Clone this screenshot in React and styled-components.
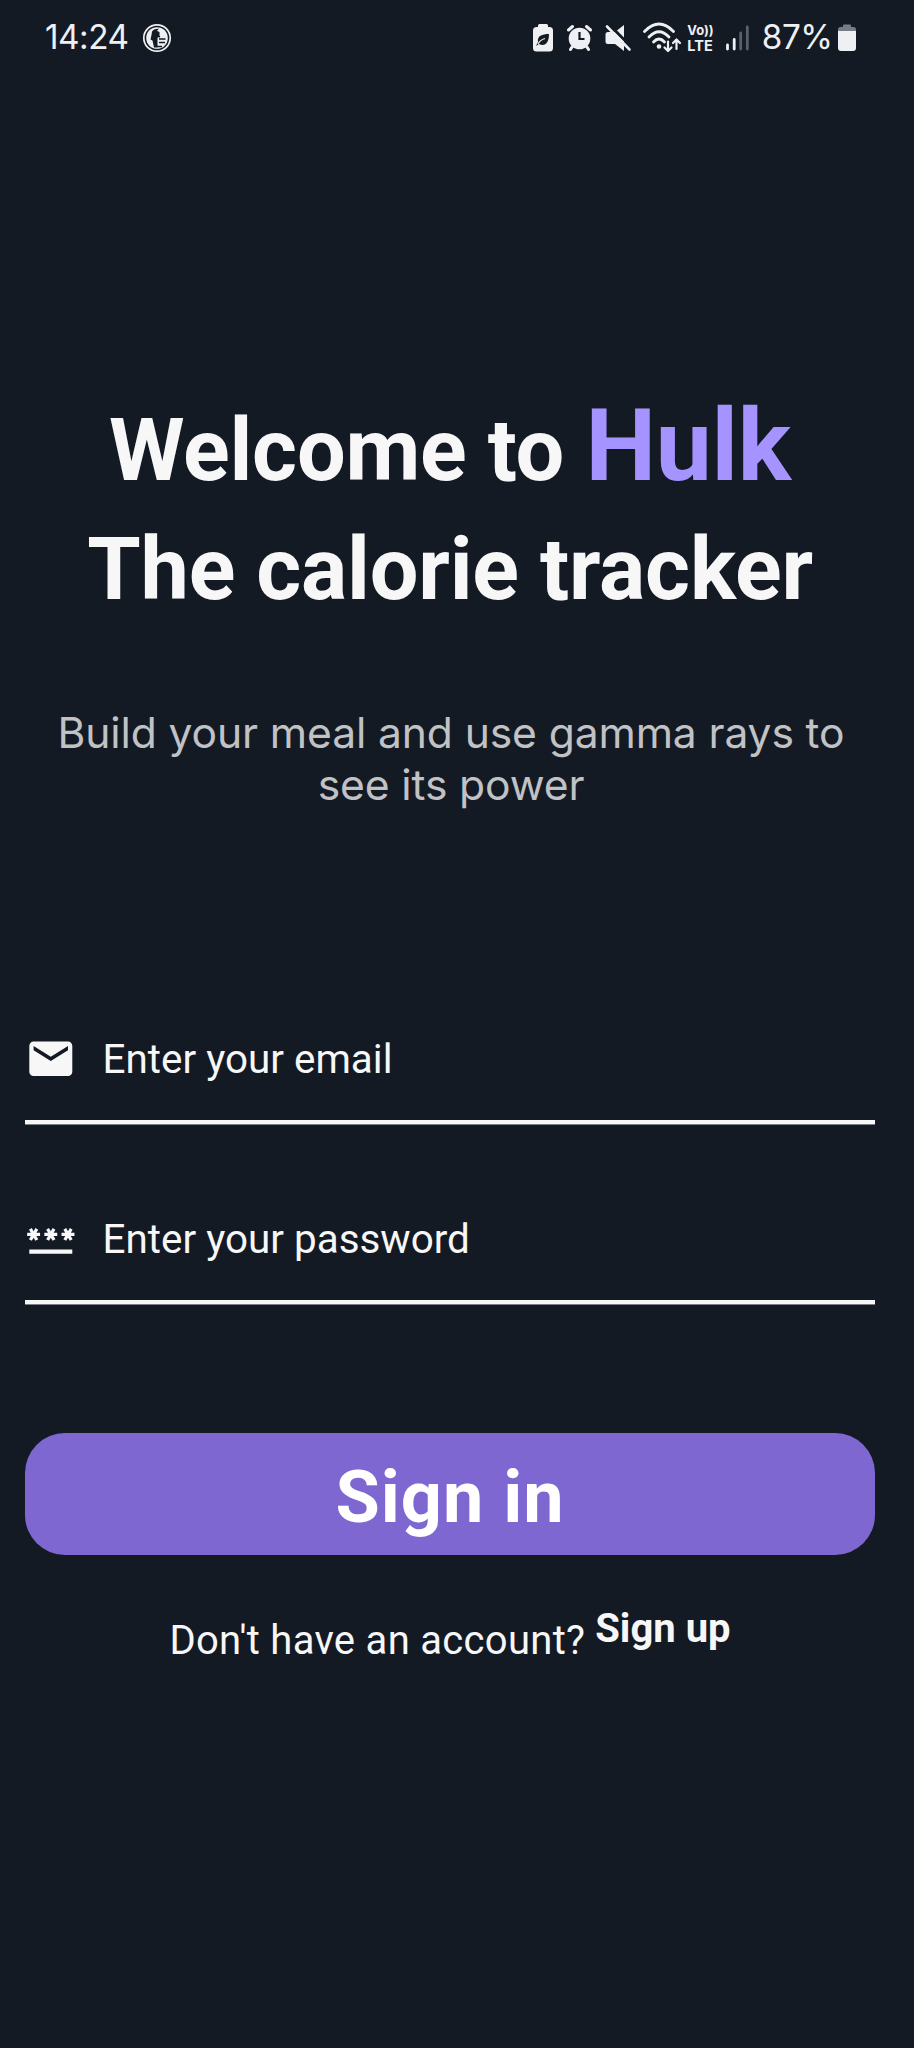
import React from "react";
import styled, { createGlobalStyle } from "styled-components";
import { MdEmail, MdPassword } from "react-icons/md";

const GlobalStyle = createGlobalStyle`
  * { box-sizing: border-box; }
  body {
    margin: 0;
    background: #141a23;
    color: #f7f7f8;
    font-family: Roboto, "Liberation Sans", sans-serif;
  }
`;

const Screen = styled.div`
  display: flex;
  flex-direction: column;
  width: 914px;
  height: 2048px;
  background: #141a23;
  overflow: hidden;
`;

const StatusBar = styled.header`
  display: flex;
  justify-content: space-between;
  height: 76px;
  padding: 0 58.5px 0 45px;
  color: #eef0f4;
`;

const StatusGroup = styled.div`
  display: flex;
  align-items: center;
`;

const StatusText = styled.span`
  padding-bottom: 2px;
  margin-left: ${(p) => p.$gap || 0}px;
  font: 400 33.3px/38px Inter, sans-serif;
  letter-spacing: -0.5px;
`;

const StatusIcon = styled.svg`
  display: block;
  flex: none;
  height: 32px;
  width: ${(p) => p.$width}px;
  margin-left: ${(p) => p.$gap || 0}px;
`;

const Volte = styled.div`
  display: flex;
  flex-direction: column;
  width: 26.5px;
  margin-left: 5.5px;
  font: 700 14px/15px Inter, sans-serif;
  white-space: nowrap;
`;

const VolteLine = styled.span`
  font-size: ${(p) => p.$size}px;
  letter-spacing: ${(p) => p.$spacing}px;
`;

const Main = styled.main`
  display: flex;
  flex-direction: column;
  padding: 315px 39px 0 25px;
`;

const Title = styled.h1`
  margin: 0;
  font-size: 86.4px;
  font-weight: 700;
  line-height: 119px;
  letter-spacing: -0.22px;
  text-align: center;
  white-space: nowrap;
`;

const Brand = styled.span`
  color: #a594ff;
  font-size: 100px;
  line-height: 0;
`;

const Subtitle = styled.p`
  margin: 78px 0 0;
  padding-left: 2px;
  color: #c0c2c5;
  font: 400 42.6px/52px Inter, sans-serif;
  letter-spacing: -0.12px;
  text-align: center;
`;

const Form = styled.form`
  display: flex;
  flex-direction: column;
  margin-top: 202px;
`;

const Field = styled.label`
  display: flex;
  align-items: center;
  height: 111px;
  padding-bottom: 15px;
  margin-bottom: 69px;
  border-bottom: 4px solid #f7f7f8;
  box-shadow: 0 1px 0 rgba(247, 247, 248, 0.45);

  svg {
    flex: none;
    width: 51.6px;
    height: 51.6px;
    margin-right: 26px;
  }
`;

const Input = styled.input`
  flex: 1;
  min-width: 0;
  height: 48px;
  padding: 0;
  border: 0;
  outline: 0;
  background: transparent;
  font: 400 40.4px/47px Roboto, sans-serif;
  color: inherit;

  &::placeholder { color: #f7f7f8; opacity: 1; }
`;

const SubmitButton = styled.button`
  height: 122px;
  margin-top: 60px;
  padding: 8px 0 0;
  border: 0;
  border-radius: 40px;
  background: #7e67d1;
  color: #fff;
  font: 700 72px/84px Roboto, sans-serif;
  letter-spacing: 1px;
`;

const Footer = styled.p`
  display: flex;
  justify-content: center;
  align-items: flex-start;
  gap: 10px;
  margin: 50px 0 0;
  font-size: 40px;
  line-height: 47px;
`;

const Prompt = styled.span`
  padding-top: 12px;
  letter-spacing: 0.3px;
`;

const SignUpLink = styled.a`
  color: inherit;
  font-weight: 700;
`;

function HeadLogo() {
  return (
    <StatusIcon $width={30} $gap={14} viewBox="0 0 30 32">
      <circle cx="15" cy="16" r="13.2" fill="none" stroke="currentColor" strokeWidth="1.7" />
      <circle cx="15" cy="16" r="10.8" fill="currentColor" />
      <path d="M10 9.500L12 7.500l5-1-2 2.500 2.500 1v4l-2 2v9.500h-3.500l-1.500-7-2-1 1-4.500z" fill="#141a23" />
      <path d="M15 13.500l3 1.500M17 17h6.500M17 20.500h6M15 24.500h5" stroke="#141a23" strokeWidth="1.500" />
    </StatusIcon>
  );
}

function EcoBatteryIcon() {
  return (
    <StatusIcon $width={20} viewBox="0 0 20 32">
      <path d="M5 5V3.500Q5 2 6.500 2h7Q15 2 15 3.500V5h1.500Q20 5 20 8.500v17.500q0 3.500-3.500 3.500h-13Q0 29.500 0 26V8.500Q0 5 3.500 5z" fill="currentColor" />
      <path d="M16 12c-7 0-12 2-11 8l-2 4 3-2c6 3 10-1 10-10z" fill="#141a23" />
      <path d="M5 22q2-4 7-5.500" stroke="currentColor" strokeWidth="1.200" fill="none" />
    </StatusIcon>
  );
}

function AlarmIcon() {
  return (
    <StatusIcon $width={26} $gap={13} viewBox="0 0 26 32">
      <circle cx="13.500" cy="16.500" r="10.800" fill="currentColor" />
      <path d="M2.500 8l4-3.500M24.500 8l-4-3.500M6 25l-1.500 2.500M21 25l1.500 2.500" stroke="currentColor" strokeWidth="3" strokeLinecap="round" />
      <path d="M13.500 10V17H18.500" stroke="#141a23" strokeWidth="2.200" fill="none" />
    </StatusIcon>
  );
}

function MuteIcon() {
  return (
    <StatusIcon $width={27} $gap={13} viewBox="0 0 27 32">
      <path d="M19 3v26l-9-7H3q-2.500 0-2.500-2.500v-7Q.5 10 3 10h7z" fill="currentColor" />
      <path d="M3.500 2L27 25.500" stroke="#141a23" strokeWidth="3" />
      <path d="M2 4.500L24.500 27.500" stroke="currentColor" strokeWidth="2.600" strokeLinecap="round" />
    </StatusIcon>
  );
}

function WifiIcon() {
  return (
    <StatusIcon $width={39} $gap={11} viewBox="0 0 39 32">
      <g fill="none" stroke="currentColor" strokeWidth="2.800" strokeLinecap="round">
        <path d="M1.500 9.500Q16 -5.500 30.500 9.500" />
        <path d="M6 15Q16 4.500 26 15" />
        <path d="M10.500 20Q16 14 21.500 20" />
      </g>
      <circle cx="16" cy="24.500" r="2.300" fill="currentColor" />
      <path d="M25 19.500v9M21.500 25.500l3.500 3.500 3.500-3.500M33.500 27V18M30 21l3.500-3.500L37 21" fill="none" stroke="currentColor" strokeWidth="2.200" strokeLinecap="round" strokeLinejoin="round" />
    </StatusIcon>
  );
}

function SignalIcon() {
  return (
    <StatusIcon $width={24} $gap={11} viewBox="0 0 24 32">
      <path d="M2.500 23v4M9.200 17.500v9.500" stroke="currentColor" strokeWidth="2.800" strokeLinecap="round" />
      <path d="M15.700 11V27M22.300 5V27" stroke="#5b6068" strokeWidth="2.800" strokeLinecap="round" />
    </StatusIcon>
  );
}

function BatteryIcon() {
  return (
    <StatusIcon $width={18} $gap={5} viewBox="0 0 18 32">
      <path d="M5 5V3.500Q5 2.500 6 2.500h6q1 0 1 1V5h2.500Q18 5 18 7.500V9H0V7.500Q0 5 2.500 5z" fill="#777c82" />
      <path d="M0 9h18v17q0 3-3 3H3q-3 0-3-3z" fill="currentColor" />
    </StatusIcon>
  );
}

export default function App() {
  return (
    <>
      <GlobalStyle />
      <Screen>
        <StatusBar>
          <StatusGroup>
            <StatusText>14:24</StatusText>
            <HeadLogo />
          </StatusGroup>
          <StatusGroup>
            <EcoBatteryIcon />
            <AlarmIcon />
            <MuteIcon />
            <WifiIcon />
            <Volte>
              <VolteLine $size={13} $spacing={-0.1}>Vo))</VolteLine>
              <VolteLine $size={14.5} $spacing={0.1}>LTE</VolteLine>
            </Volte>
            <SignalIcon />
            <StatusText $gap={13}>87%</StatusText>
            <BatteryIcon />
          </StatusGroup>
        </StatusBar>
        <Main>
          <Title>
            Welcome to <Brand>Hulk</Brand>
            <br />
            The calorie tracker
          </Title>
          <Subtitle>Build your meal and use gamma rays to see its power</Subtitle>
          <Form>
            <Field>
              <MdEmail />
              <Input type="email" placeholder="Enter your email" />
            </Field>
            <Field>
              <MdPassword />
              <Input type="password" placeholder="Enter your password" />
            </Field>
            <SubmitButton type="button">Sign in</SubmitButton>
          </Form>
          <Footer>
            <Prompt>Don't have an account?</Prompt>
            <SignUpLink>Sign up</SignUpLink>
          </Footer>
        </Main>
      </Screen>
    </>
  );
}
